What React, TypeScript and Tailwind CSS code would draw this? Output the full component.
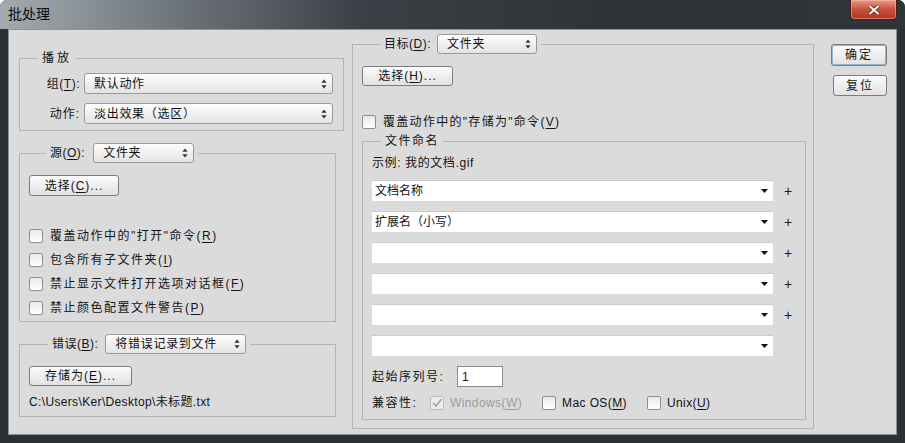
import React from 'react';

const U = ({ children }: { children: React.ReactNode }) => (
  <span className="underline underline-offset-[2px]">{children}</span>
);

function Spinner() {
  return (
    <svg width="6" height="10" viewBox="0 0 6 10" className="shrink-0">
      <path d="M3 0.5L5.6 3.8H0.4Z" fill="#333" />
      <path d="M3 9.5L5.6 6.2H0.4Z" fill="#333" />
    </svg>
  );
}

const Select = ({ value, className }: { value: string; className: string }) => (
  <div
    className={`flex h-[20px] items-center justify-between rounded-[3px] border border-[#9a9a9a] bg-[linear-gradient(#fdfdfd,#e4e4e4)] pl-[9px] pr-[5px] tracking-[0.7px] text-[#111] ${className}`}
  >
    <span>{value}</span>
    <Spinner />
  </div>
);

const Btn = ({ children, className }: { children: React.ReactNode; className: string }) => (
  <div
    className={`flex items-center justify-center rounded-[3px] border border-[#7c7c7c] bg-[linear-gradient(#fcfcfc,#e1e1e1)] text-[#111] ${className}`}
  >
    {children}
  </div>
);

const Check = ({ checked, disabled }: { checked?: boolean; disabled?: boolean }) => (
  <div
    className={`relative h-[14px] w-[14px] shrink-0 rounded-[2px] border ${
      disabled ? 'border-[#bdbdbd] bg-[#ececec]' : 'border-[#8e8e8e] bg-[linear-gradient(#e9e9e9,#ffffff)]'
    }`}
  >
    {checked && (
      <svg width="12" height="12" viewBox="0 0 12 12" className="absolute left-0 top-0">
        <path d="M2 6L5 9L10.5 2" fill="none" stroke={disabled ? '#a3a3a3' : '#222'} strokeWidth="1.6" />
      </svg>
    )}
  </div>
);

const CheckRow = ({ children }: { children: React.ReactNode }) => (
  <div className="flex h-[24px] items-center gap-[7px]">
    <Check />
    <span className="tracking-[1.5px]">{children}</span>
  </div>
);

const NameField = ({ value, plus }: { value?: string; plus?: boolean }) => (
  <div className="flex h-[21px] items-center">
    <div className="flex h-full w-[401px] items-center justify-between border-t border-[#cbcbcb] bg-white pl-[3px] pr-[5px]">
      <span>{value}</span>
      <svg width="7" height="4" viewBox="0 0 7 4">
        <path d="M0 0H7L3.5 4Z" fill="#111" />
      </svg>
    </div>
    {plus && <span className="ml-[11px] text-[14px] leading-[14px] text-[#1a1a1a]">+</span>}
  </div>
);

export default function App() {
  return (
    <div className="flex h-[443px] w-[905px] flex-col overflow-hidden rounded-t-[7px] bg-[#2c3136] font-['Liberation_Sans','Noto_Sans_CJK_SC',sans-serif] text-[12px] leading-[16px] text-[#141414]">
      {/* title bar */}
      <div className="flex h-[29px] shrink-0 items-start justify-between bg-[linear-gradient(to_right,#a4abb0,#6d7479_20%,#3a4045_40%,#2d3237_70%,#30353a)] pl-[8px] pr-[8px]">
        <span className="mt-[5px] text-[14px] leading-[18px] text-[#0c0c0c]">批处理</span>
        <div className="flex h-[20px] w-[47px] items-center justify-center rounded-b-[4px] border border-t-0 border-[#4b1d16] bg-[linear-gradient(#e89b8b,#c8503a_50%,#b23520)] shadow-[inset_0_0_0_1px_rgba(255,200,190,0.45)]">
          <svg width="12" height="10" viewBox="0 0 12 10">
            <path d="M1.5 1L10.5 9M10.5 1L1.5 9" stroke="#5a1e14" strokeWidth="3.6" />
            <path d="M1.5 1L10.5 9M10.5 1L1.5 9" stroke="#fff" strokeWidth="2" />
          </svg>
        </div>
      </div>

      {/* body */}
      <div className="mx-[8px] mb-[8px] flex flex-1 items-start border border-[#8d9398] bg-[#dbdbdb] pl-[10px]">
        {/* left column */}
        <div className="mt-[20px] flex w-[325px] flex-col">
          <fieldset className="w-[325px] border border-[#b4b4b4] px-[10px] pb-[6px] pt-[7px]">
            <legend className="ml-[8px] px-[4px] tracking-[3px]">播放</legend>
            <div className="flex flex-col gap-[9px]">
              <div className="flex h-[21px] items-center gap-[4px]">
                <span className="w-[50px] text-right tracking-[0.5px]">
                  组(<U>T</U>):
                </span>
                <Select value="默认动作" className="h-[21px] flex-1" />
              </div>
              <div className="flex h-[21px] items-center gap-[4px]">
                <span className="w-[50px] text-right tracking-[1px]">动作:</span>
                <Select value="淡出效果（选区）" className="h-[21px] flex-1" />
              </div>
            </div>
          </fieldset>

          <fieldset className="mt-[12px] w-[317px] border border-[#b4b4b4] px-[9px] pb-[1px] pt-[12px]">
            <legend className="ml-[17px] flex items-center gap-[8px] px-[4px]">
              <span className="tracking-[0.5px]">
                源(<U>O</U>):
              </span>
              <Select value="文件夹" className="w-[101px]" />
            </legend>
            <Btn className="h-[21px] w-[90px] tracking-[1px]">
              <span>
                选择(<U>C</U>)...
              </span>
            </Btn>
            <div className="mt-[28px] flex flex-col">
              <CheckRow>
                覆盖动作中的"打开"命令(<U>R</U>)
              </CheckRow>
              <CheckRow>
                包含所有子文件夹(<U>I</U>)
              </CheckRow>
              <CheckRow>
                禁止显示文件打开选项对话框(<U>F</U>)
              </CheckRow>
              <CheckRow>
                禁止颜色配置文件警告(<U>P</U>)
              </CheckRow>
            </div>
          </fieldset>

          <fieldset className="mt-[12px] w-[317px] border border-[#b4b4b4] px-[9px] pb-[6px] pt-[12px]">
            <legend className="ml-[19px] flex items-center gap-[7px] px-[4px]">
              <span className="tracking-[0.5px]">
                错误(<U>B</U>):
              </span>
              <Select value="将错误记录到文件" className="w-[141px]" />
            </legend>
            <Btn className="h-[20px] w-[103px] tracking-[1px]">
              <span>
                存储为(<U>E</U>)...
              </span>
            </Btn>
            <div className="mt-[8px] tracking-[0.35px]">C:\Users\Ker\Desktop\未标题.txt</div>
          </fieldset>
        </div>

        {/* right column */}
        <fieldset className="ml-[8px] mt-[4px] w-[462px] border border-[#b4b4b4] pb-[8px] pl-[9px] pr-[6px] pt-[12px]">
          <legend className="ml-[18px] flex items-center gap-[6px] px-[4px]">
            <span className="tracking-[0.5px]">
              目标(<U>D</U>):
            </span>
            <Select value="文件夹" className="w-[100px]" />
          </legend>
          <Btn className="h-[20px] w-[91px] tracking-[1px]">
            <span>
              选择(<U>H</U>)...
            </span>
          </Btn>
          <div className="mt-[26px] flex h-[20px] items-center gap-[7px]">
            <Check />
            <span className="tracking-[1.3px]">
              覆盖动作中的"存储为"命令(<U>V</U>)
            </span>
          </div>

          <fieldset className="mt-[1px] w-[444px] border border-[#b4b4b4] pb-[6px] pl-[9px] pt-[6px]">
            <legend className="ml-[9px] px-[4px] tracking-[1.5px]">文件命名</legend>
            <div className="tracking-[0.6px]">示例: 我的文档.gif</div>
            <div className="mt-[9px] flex flex-col gap-[10px]">
              <NameField value="文档名称" plus />
              <NameField value="扩展名（小写）" plus />
              <NameField plus />
              <NameField plus />
              <NameField plus />
              <NameField />
            </div>
            <div className="mt-[10px] flex h-[21px] items-center">
              <span className="w-[85px] tracking-[1.5px]">起始序列号:</span>
              <div className="flex h-[21px] w-[46px] items-center border border-[#8a8a8a] bg-white pl-[4px]">1</div>
            </div>
            <div className="mt-[6px] flex h-[20px] items-center">
              <span className="w-[58px] tracking-[1.5px]">兼容性:</span>
              <Check checked disabled />
              <span className="ml-[6px] tracking-[0.4px] text-[#9a9a9a]">
                Windows(<U>W</U>)
              </span>
              <div className="ml-[20px]">
                <Check />
              </div>
              <span className="ml-[6px] tracking-[0.4px]">
                Mac OS(<U>M</U>)
              </span>
              <div className="ml-[20px]">
                <Check />
              </div>
              <span className="ml-[6px] tracking-[0.4px]">
                Unix(<U>U</U>)
              </span>
            </div>
          </fieldset>
        </fieldset>

        {/* buttons */}
        <div className="ml-[17px] mt-[14px] flex w-[56px] flex-col items-end gap-[9px]">
          <Btn className="h-[22px] w-[56px] border-[#3c3c3c] shadow-[inset_0_0_0_1px_#9bb3c9] tracking-[2px]">确定</Btn>
          <Btn className="h-[21px] w-[54px] tracking-[2px]">复位</Btn>
        </div>
      </div>
    </div>
  );
}
